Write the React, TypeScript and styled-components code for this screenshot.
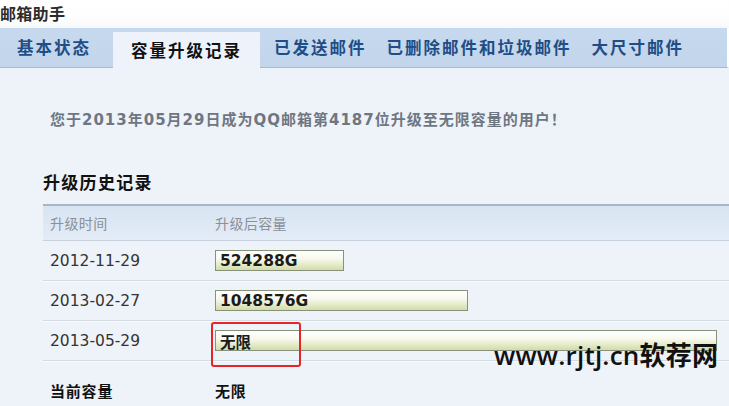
import React from "react";
import styled, { createGlobalStyle } from "styled-components";

const GlobalStyle = createGlobalStyle`
  html, body { margin: 0; padding: 0; }
  body {
    width: 729px;
    height: 406px;
    overflow: hidden;
    background: #eef3fa;
    font-family: "DejaVu Sans", "Noto Sans CJK SC", sans-serif;
  }
`;

const Page = styled.div`
  position: relative;
  width: 729px;
  height: 406px;
  overflow: hidden;
  background: #eef3fa;
`;

const TitleBar = styled.div`
  height: 28px;
  background: linear-gradient(to bottom, #ffffff 0%, #fdfdfd 70%, #f6f8fb 100%);
  display: flex;
  align-items: center;
`;

const Title = styled.h1`
  margin: 0 0 2px 0;
  font-family: "Noto Sans CJK SC", sans-serif;
  font-size: 16px;
  font-weight: 700;
  color: #2b2b2b;
  letter-spacing: 0.3px;
  line-height: 20px;
`;

const TabBar = styled.nav`
  height: 39px;
  background: linear-gradient(to bottom, #c6d9ee 0%, #c2d5eb 100%);
  border-bottom: 1px solid #a9bacd;
  border-right: 2px solid #ffffff;
  display: flex;
  align-items: flex-end;
  padding-left: 7px;
`;

const Tab = styled.div<{ $active?: boolean }>`
  height: ${(p) => (p.$active ? "36px" : "39px")};
  margin: ${(p) => (p.$active ? "0 4px -1px 12px" : "0")};
  padding: ${(p) => (p.$active ? "0 18px 0" : "0 10px 1px")};
  display: flex;
  align-items: center;
  background: ${(p) => (p.$active ? "#eef3fb" : "transparent")};
  font-family: "Noto Sans CJK SC", sans-serif;
  font-size: 16.5px;
  font-weight: 700;
  letter-spacing: 2px;
  color: ${(p) => (p.$active ? "#111111" : "#1f4d86")};
  white-space: nowrap;
  box-sizing: border-box;
`;

const Content = styled.main`
  padding: 0 0 0 43px;
`;

const Notice = styled.p`
  margin: 42px 0 0 7px;
  font-size: 15px;
  line-height: 20px;
  font-weight: 700;
  letter-spacing: 1px;
  color: #6e7682;
  white-space: nowrap;
`;

const SectionTitle = styled.h2`
  margin: 41px 0 0 0;
  font-family: "Noto Sans CJK SC", sans-serif;
  font-size: 17px;
  line-height: 22px;
  font-weight: 700;
  letter-spacing: 1.3px;
  color: #111111;
`;

const Table = styled.div`
  margin-top: 11px;
  display: grid;
  grid-template-columns: 165px 1fr;
`;

const HeaderCell = styled.div`
  height: 34px;
  border-top: 2px solid #a8b7c6;
  border-bottom: 1px solid #c7d2de;
  background: linear-gradient(to bottom, #d8e4f2 0%, #e3ecf7 100%);
  display: flex;
  align-items: center;
  padding-left: 7px;
  font-family: "Noto Sans CJK SC", sans-serif;
  font-size: 14px;
  letter-spacing: 0.4px;
  color: #8b9099;
`;

const Cell = styled.div`
  position: relative;
  height: 39px;
  border-bottom: 1px solid #d5dbe3;
  box-shadow: 0 1px 0 #f8fafd;
  display: flex;
  align-items: center;
  padding: 0 12px 0 7px;
  font-size: 15.5px;
  color: #333333;
`;

const SummaryCell = styled.div`
  height: 58px;
  display: flex;
  align-items: center;
  padding-left: 7px;
  font-family: "Noto Sans CJK SC", sans-serif;
  font-size: 15px;
  font-weight: 700;
  letter-spacing: 0.8px;
  color: #111111;
`;

const Bar = styled.div`
  height: 21px;
  box-sizing: border-box;
  border: 1px solid #87927a;
  background: linear-gradient(to bottom, #ffffff 0%, #f8f9ee 40%, #e6ebcb 70%, #d3dba9 100%);
  display: flex;
  align-items: center;
  padding-left: 4px;
  font-size: 15.5px;
  font-weight: 700;
  color: #1b1b1b;
  white-space: nowrap;
`;

const Highlight = styled.div`
  position: absolute;
  left: 3px;
  top: 1px;
  width: 90px;
  height: 45px;
  box-sizing: border-box;
  border: 2.5px solid #e6252a;
  border-radius: 3px;
  pointer-events: none;
`;

const Watermark = styled.div`
  position: absolute;
  left: 494px;
  top: 337px;
  font-family: "Open Sans", "Noto Sans CJK SC", sans-serif;
  font-size: 26px;
  font-weight: 600;
  line-height: 36px;
  letter-spacing: 0.2px;
  color: #111111;
  white-space: nowrap;
`;

const tabs = ["基本状态", "容量升级记录", "已发送邮件", "已删除邮件和垃圾邮件", "大尺寸邮件"];

const history = [
  { date: "2012-11-29", label: "524288G", pct: 25.7, marked: false },
  { date: "2013-02-27", label: "1048576G", pct: 50.4, marked: false },
  { date: "2013-05-29", label: "无限", pct: 100, marked: true },
];

export default function App() {
  return (
    <>
      <GlobalStyle />
      <Page>
        <TitleBar>
          <Title>邮箱助手</Title>
        </TitleBar>
        <TabBar>
          {tabs.map((t, i) => (
            <Tab key={t} $active={i === 1}>
              {t}
            </Tab>
          ))}
        </TabBar>
        <Content>
          <Notice>您于2013年05月29日成为QQ邮箱第4187位升级至无限容量的用户！</Notice>
          <SectionTitle>升级历史记录</SectionTitle>
          <Table>
            <HeaderCell>升级时间</HeaderCell>
            <HeaderCell>升级后容量</HeaderCell>
            {history.map((h) => (
              <React.Fragment key={h.date}>
                <Cell>{h.date}</Cell>
                <Cell>
                  <Bar style={{ width: `${h.pct}%` }}>{h.label}</Bar>
                  {h.marked && <Highlight />}
                </Cell>
              </React.Fragment>
            ))}
            <SummaryCell>当前容量</SummaryCell>
            <SummaryCell>无限</SummaryCell>
          </Table>
        </Content>
        <Watermark>www.rjtj.cn软荐网</Watermark>
      </Page>
    </>
  );
}
